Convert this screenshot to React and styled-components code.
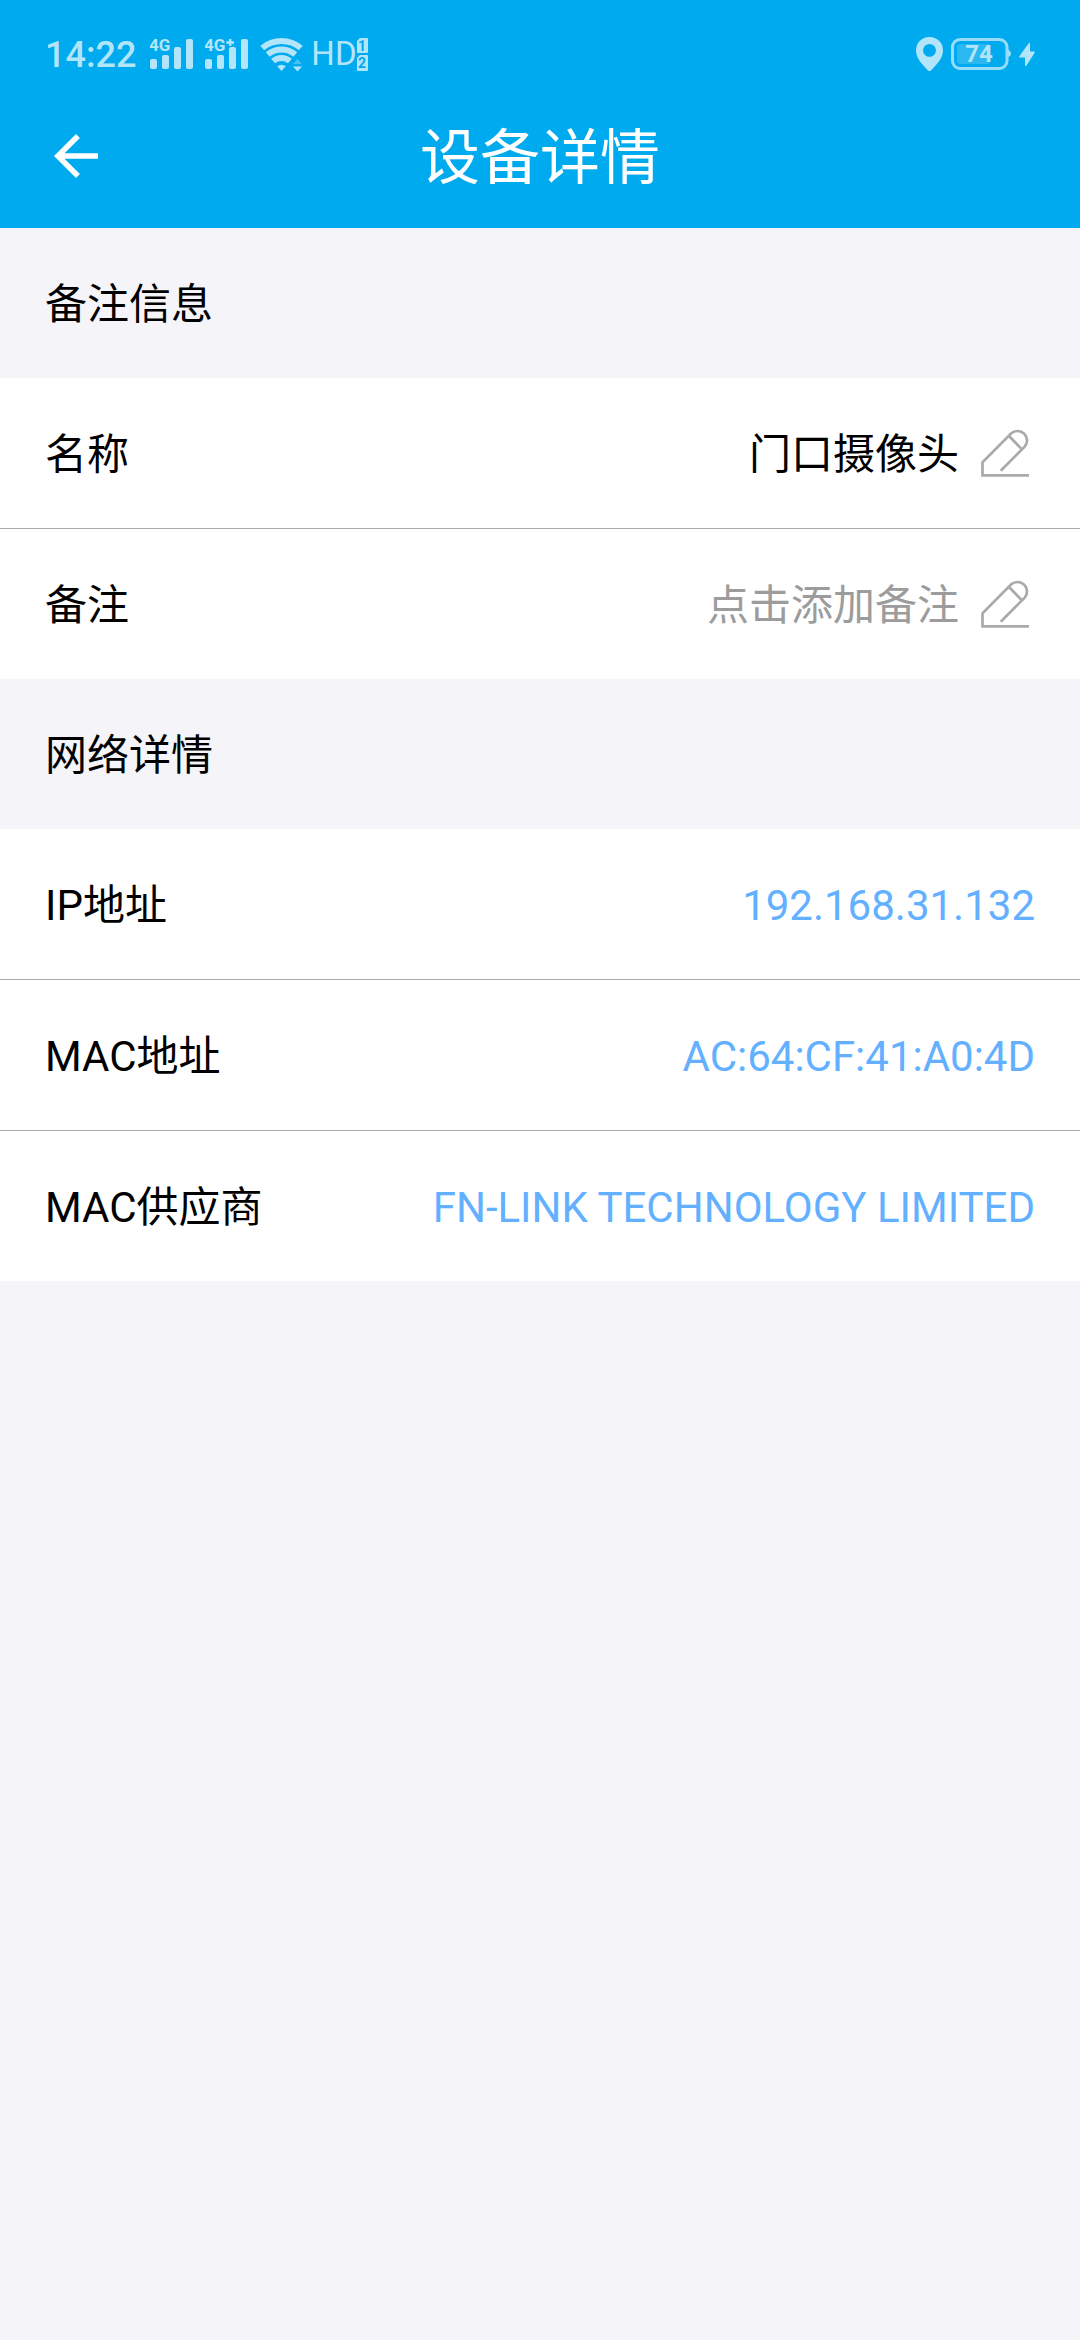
import React from 'react';
import styled, {createGlobalStyle} from 'styled-components';

const vr = {
  blue: '#00aaee',
  lightBlue: '#62b0ff',
  status: '#b3e5fa',
  page: '#f4f4f9',
  line: '#aaaaaa',
  hint: '#9c9c9c',
  side: '45px',
  font: "Roboto, 'Noto Sans CJK SC', sans-serif"
}

const GlobalStyle = createGlobalStyle`
  * {
    box-sizing: border-box;
  }

  body {
    margin: 0;
    background: ${vr.page};
    font-family: ${vr.font};
    font-size: 42px;
    line-height: 64px;
    color: black;
  }

  button {
    font: inherit;
    color: inherit;
    background: none;
    border: none;
    padding: 0;
    cursor: pointer;
  }
`

const Header = styled.header`
  background: ${vr.blue};
  color: white;
`

const StatusBar = styled.div`
  display: flex;
  align-items: center;
  justify-content: space-between;
  padding: 24px ${vr.side} 0;
  line-height: 60px;
  color: ${vr.status};
`

const StatusGroup = styled.div`
  display: flex;
  align-items: center;
  height: 60px;
  gap: 8px;

  svg {
    display: block;
    fill: currentColor;
  }
`

const Time = styled.span`
  padding: 2px 6px 0 0;
  font-size: 36px;
  font-weight: 500;
`

const Hd = styled.span`
  display: flex;
  align-items: center;
  font-size: 33px;
`

const TitleBar = styled.div`
  display: grid;
  grid-template-columns: 1fr auto 1fr;
  align-items: start;
  padding: 30px 54px 24px;
`

const BackButton = styled.button`
  display: flex;
  align-items: center;
  justify-self: start;
  height: 84px;

  svg {
    fill: white;
  }
`

const Title = styled.h1`
  margin: 0;
  font-size: 60px;
  font-weight: 400;
  line-height: 90px;
`

const SectionTitle = styled.h2`
  margin: 0;
  padding: 45px ${vr.side} 41px;
  font-size: 42px;
  font-weight: 400;
`

const List = styled.div`
  background: white;
`

const Row = styled.div`
  display: flex;
  justify-content: space-between;
  padding: 45px ${vr.side} 41px;

  & + & {
    border-top: 1px solid ${vr.line};
  }
`

const Value = styled.span`
  color: ${vr.lightBlue};
`

const EditButton = styled.button`
  && {
    display: flex;
    align-items: flex-start;
    gap: 16px;
    color: ${p => p.$empty ? vr.hint : 'black'};
  }
`

const Signal = ({ plus }) => (
  <svg width="47" height="36" viewBox="0 0 47 36">
    <rect x="0" y="23" width="7" height="10" rx="2" />
    <rect x="12" y="19" width="7" height="14" rx="2" />
    <rect x="24" y="11" width="7" height="22" rx="2" />
    <rect x="36" y="3" width="7" height="30" rx="2" />
    <text x="-1" y="15" fontSize="17" fontWeight="700">4G</text>
    {plus && <path d="M24 3h2.4v2.3h2.6v2.4h-2.6v2.3h-2.4v-2.3h-2.6v-2.4h2.6z" />}
  </svg>
)

const Wifi = () => (
  <svg width="43" height="36" viewBox="0 0 43 36">
    <g fill="none" stroke="currentColor" strokeWidth="6">
      <path d="M2.2 12A30 30 0 0 1 40.8 12" />
      <path d="M7.7 18.5A21.5 21.5 0 0 1 35.3 18.5" />
      <path d="M13.1 25A13 13 0 0 1 29.9 25" />
    </g>
    <path d="M21.5 35l-4.3-4.8q4.3-3 8.6 0z" />
    <path d="M33 28l4.5-5 4.5 5z" opacity="0.4" />
    <path d="M33 30.5l4.5 5 4.5-5z" />
  </svg>
)

const SimCards = () => (
  <svg width="11" height="36" viewBox="0 0 11 36">
    <path d="M3 2h7a1 1 0 0 1 1 1v13a1 1 0 0 1-1 1H1a1 1 0 0 1-1-1V5z" />
    <path d="M3 19h7a1 1 0 0 1 1 1v14a1 1 0 0 1-1 1H1a1 1 0 0 1-1-1V22z" />
    <g fill={vr.blue} fontSize="14" fontWeight="700" textAnchor="middle">
      <text x="5" y="15">1</text>
      <text x="5" y="32">2</text>
    </g>
  </svg>
)

const Pin = () => (
  <svg width="27" height="36" viewBox="0 0 27 36">
    <path
      fillRule="evenodd"
      d="M13.5 1A13.3 13.3 0 0 0 0 14.4C0 22 6 28 11.5 34q2 2 4 0C21 28 27 22 27 14.4A13.3 13.3 0 0 0 13.5 1zm0 7a6.4 6.4 0 1 1 0 12.8a6.4 6.4 0 1 1 0-12.8z"
    />
  </svg>
)

const Battery = () => (
  <svg width="60" height="36" viewBox="0 0 60 36">
    <rect x="1.5" y="3.5" width="54.5" height="29" rx="7.5" fill="none" stroke="currentColor" strokeWidth="3" opacity="0.85" />
    <path d="M57 14q3 1 3 3.5t-3 3.5z" opacity="0.85" />
    <rect x="6" y="8" width="33" height="20" rx="3" opacity="0.24" />
    <text x="28" y="26" fontSize="24" fontWeight="700" textAnchor="middle">74</text>
  </svg>
)

const Bolt = () => (
  <svg width="16" height="36" viewBox="0 0 16 36">
    <path d="M9.5 7.5Q11 6 11 8V15.5H15q1.5 0 .5 1.5L7.5 29.5Q6 31 6 29V21.5H1q-1.5 0-.5-1.500z" />
  </svg>
)

const ArrowBack = () => (
  <svg width="44" height="44" viewBox="4 4 16 16">
    <path d="M20 11H7.83l5.59-5.59L12 4l-8 8 8 8 1.41-1.41L7.83 13H20v-2z" />
  </svg>
)

const Pencil = () => (
  <svg width="60" height="60" viewBox="0 0 60 60" fill="none" stroke={vr.line} strokeWidth="2.7">
    <path d="M54 52.4H7.5V39.3L36.3 10.3A9.5 9.5 0 0 1 49.7 23.7L25.7 47.7" />
    <path d="M34 13L47 26.4" />
  </svg>
)

const EditRow = ({ label, value, hint }) => (
  <Row>
    <span>{label}</span>
    <EditButton type="button" $empty={!value}>
      {value || hint}
      <Pencil />
    </EditButton>
  </Row>
)

const InfoRow = ({ label, value }) => (
  <Row>
    <span>{label}</span>
    <Value>{value}</Value>
  </Row>
)

const App = () => (
  <>
    <GlobalStyle />
    <Header>
      <StatusBar>
        <StatusGroup>
          <Time>14:22</Time>
          <Signal />
          <Signal plus />
          <Wifi />
          <Hd>HD<SimCards /></Hd>
        </StatusGroup>
        <StatusGroup>
          <Pin />
          <Battery />
          <Bolt />
        </StatusGroup>
      </StatusBar>
      <TitleBar>
        <BackButton type="button" aria-label="返回"><ArrowBack /></BackButton>
        <Title>设备详情</Title>
      </TitleBar>
    </Header>
    <main>
      <SectionTitle>备注信息</SectionTitle>
      <List>
        <EditRow label="名称" value="门口摄像头" />
        <EditRow label="备注" hint="点击添加备注" />
      </List>
      <SectionTitle>网络详情</SectionTitle>
      <List>
        <InfoRow label="IP地址" value="192.168.31.132" />
        <InfoRow label="MAC地址" value="AC:64:CF:41:A0:4D" />
        <InfoRow label="MAC供应商" value="FN-LINK TECHNOLOGY LIMITED" />
      </List>
    </main>
  </>
)

export default App;
